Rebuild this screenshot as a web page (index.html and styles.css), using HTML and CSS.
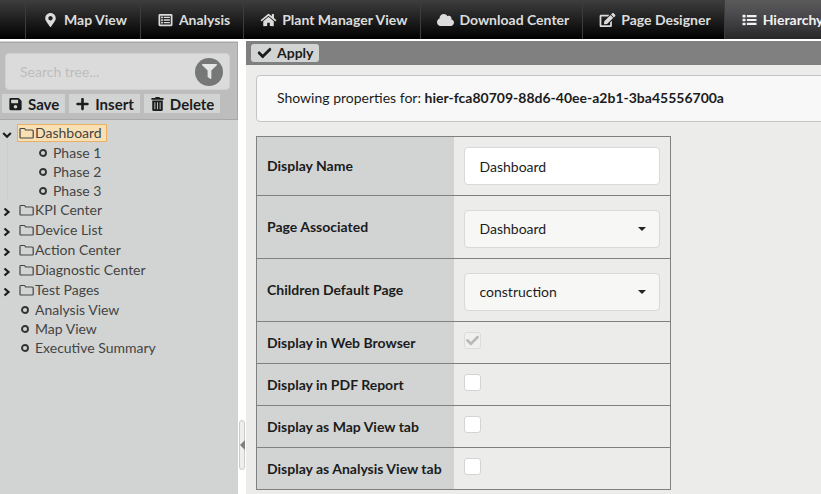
FILE: index.html
```
<!DOCTYPE html>
<html lang="en">
<head>
<meta charset="utf-8">
<title>Hierarchy</title>
<link rel="stylesheet" href="styles.css">
</head>
<body>
<svg class="sprite" aria-hidden="true">
  <symbol id="i-folder" viewBox="0 0 15 12"><path d="M1 10.2V2.3q0-.8.8-.8h3.4q.6 0 .8.5l.6 1h6.6q1 0 1 .9v6.3q0 .8-.8.8H1.8q-.8 0-.8-.8z" fill="none" stroke="currentColor" stroke-width="1.2"/></symbol>
  <symbol id="i-right" viewBox="0 0 10 10"><path d="M2.5 1.5L6.500 5l-4 3.500" fill="none" stroke="currentColor" stroke-width="2.2"/></symbol>
  <symbol id="i-down" viewBox="0 0 10 10"><path d="M1.200 3L5 6.700 8.800 3" fill="none" stroke="currentColor" stroke-width="2.2"/></symbol>
  <symbol id="i-dot" viewBox="0 0 10 10"><circle cx="5" cy="5" r="3" fill="none" stroke="currentColor" stroke-width="1.900"/></symbol>
  <symbol id="i-check" viewBox="0 0 512 512"><path d="M173.898 439.404l-166.4-166.4c-9.997-9.997-9.997-26.206 0-36.204l36.203-36.204c9.997-9.998 26.207-9.998 36.204 0L192 312.69 432.095 72.596c9.997-9.997 26.207-9.997 36.204 0l36.203 36.204c9.997 9.997 9.997 26.206 0 36.204l-294.4 294.401c-9.998 9.997-26.207 9.997-36.204-.001z"/></symbol>
</svg>

<nav class="nav">
  <a class="nav-item" href="#"><svg class="icon" viewBox="0 0 384 512"><path d="M172.268 501.67C26.97 291.031 0 269.413 0 192 0 85.961 85.961 0 192 0s192 85.961 192 192c0 77.413-26.97 99.031-172.268 309.67-9.535 13.774-29.93 13.773-39.464 0zM192 272c44.183 0 80-35.817 80-80s-35.817-80-80-80-80 35.817-80 80 35.817 80 80 80z"/></svg>Map View</a>
  <a class="nav-item" href="#"><svg class="icon" viewBox="0 0 512 512"><path fill-rule="evenodd" d="M48 32h416q48 0 48 48v352q0 48-48 48H48q-48 0-48-48V80q0-48 48-48zM64 96v320h384V96zM96 128h64v64H96zM96 224h64v64H96zM96 320h64v64H96zM192 136h224v48H192zM192 232h224v48H192zM192 328h224v48H192z"/></svg>Analysis</a>
  <a class="nav-item" href="#"><svg class="icon" viewBox="0 0 576 512"><path d="M280.37 148.26L96 300.11V464a16 16 0 0 0 16 16l112.06-.29a16 16 0 0 0 15.92-16V368a16 16 0 0 1 16-16h64a16 16 0 0 1 16 16v95.64a16 16 0 0 0 16 16.05L464 480a16 16 0 0 0 16-16V300L295.67 148.26a12.19 12.19 0 0 0-15.3 0zM571.6 251.47L488 182.56V44.05a12 12 0 0 0-12-12h-56a12 12 0 0 0-12 12v72.61L318.47 43a48 48 0 0 0-61 0L4.34 251.47a12 12 0 0 0-1.6 16.9l25.5 31A12 12 0 0 0 45.15 301l235.22-193.74a12.19 12.19 0 0 1 15.3 0L530.9 301a12 12 0 0 0 16.9-1.6l25.5-31a12 12 0 0 0-1.7-16.93z"/></svg>Plant Manager View</a>
  <a class="nav-item" href="#"><svg class="icon" viewBox="0 0 640 512"><path d="M537.6 226.6c4.1-10.7 6.4-22.4 6.4-34.6 0-53-43-96-96-96-19.7 0-38.1 6-53.3 16.2C367 64.2 315.3 32 256 32c-88.4 0-160 71.6-160 160 0 2.7.1 5.4.2 8.1C40.2 219.8 0 273.2 0 336c0 79.5 64.5 144 144 144h368c70.7 0 128-57.3 128-128 0-61.900-44-113.600-102.400-125.400z"/></svg>Download Center</a>
  <a class="nav-item" href="#"><svg class="icon" viewBox="0 0 576 512"><path d="M402.6 83.2l90.2 90.2c3.8 3.8 3.8 10 0 13.8L274.4 405.6l-92.8 10.3c-12.4 1.4-22.9-9.1-21.5-21.5l10.3-92.8L388.8 83.2c3.8-3.8 10-3.8 13.8 0zm162-22.9l-48.8-48.8c-15.2-15.2-39.9-15.2-55.2 0l-35.4 35.4c-3.8 3.8-3.8 10 0 13.8l90.2 90.2c3.8 3.8 10 3.8 13.8 0l35.4-35.4c15.2-15.3 15.2-40 0-55.2zM384 346.2V448H64V128h229.800c3.200 0 6.200-1.300 8.500-3.500l40-40c7.600-7.600 2.200-20.500-8.500-20.500H48C21.500 64 0 85.500 0 112v352c0 26.500 21.500 48 48 48h352c26.500 0 48-21.500 48-48V306.200c0-10.700-12.900-16-20.500-8.500l-40 40c-2.200 2.300-3.500 5.300-3.500 8.500z"/></svg>Page Designer</a>
  <a class="nav-item active" href="#" aria-current="page"><svg class="icon" viewBox="0 0 512 512"><path d="M16 64h80q16 0 16 16v64q0 16-16 16H16q-16 0-16-16V80q0-16 16-16zM16 208h80q16 0 16 16v64q0 16-16 16H16q-16 0-16-16v-64q0-16 16-16zM16 352h80q16 0 16 16v64q0 16-16 16H16q-16 0-16-16v-64q0-16 16-16zM160 72h352v80H160zM160 216h352v80H160zM160 360h352v80H160z"/></svg>Hierarchy</a>
</nav>

<div class="workspace">
  <aside class="sidebar">
    <div class="tools">
      <div class="search">
        <input class="search-input" type="text" placeholder="Search tree..." aria-label="Search tree">
        <button class="filter" type="button" aria-label="Filter"><svg viewBox="0 0 512 512"><path d="M487.976 0H24.028C2.710 0-8.047 25.866 7.058 40.971L192 225.941V432c0 7.831 3.821 15.170 10.237 19.662l80 55.980C298.020 518.690 320 507.493 320 487.980V225.941l184.947-184.970C520.021 25.896 509.338 0 487.976 0z"/></svg></button>
      </div>
      <div class="actions">
        <button class="btn" type="button"><svg class="icon" viewBox="0 0 448 512"><path d="M433.941 129.941l-83.882-83.882A48 48 0 0 0 316.118 32H48C21.490 32 0 53.490 0 80v352c0 26.510 21.490 48 48 48h352c26.510 0 48-21.490 48-48V163.882a48 48 0 0 0-14.059-33.941zM224 416c-35.346 0-64-28.654-64-64 0-35.346 28.654-64 64-64s64 28.654 64 64c0 35.346-28.654 64-64 64zm96-304.520V212c0 6.627-5.373 12-12 12H76c-6.627 0-12-5.373-12-12V108c0-6.627 5.373-12 12-12h228.520c3.183 0 6.235 1.264 8.485 3.515l3.480 3.480A11.996 11.996 0 0 1 320 111.480z"/></svg>Save</button>
        <button class="btn" type="button"><svg class="icon" viewBox="0 0 448 512"><path d="M416 208H272V64c0-17.670-14.330-32-32-32h-32c-17.670 0-32 14.330-32 32v144H32c-17.670 0-32 14.330-32 32v32c0 17.670 14.330 32 32 32h144v144c0 17.670 14.330 32 32 32h32c17.670 0 32-14.330 32-32V304h144c17.670 0 32-14.330 32-32v-32c0-17.670-14.330-32-32-32z"/></svg>Insert</button>
        <button class="btn" type="button"><svg class="icon" viewBox="0 0 448 512"><path fill-rule="evenodd" d="M16 32h120l18-32h140l18 32h120q16 0 16 16v48H0V48q0-16 16-16zM32 128h384v336q0 48-48 48H80q-48 0-48-48zM112 192v256h32V192zM208 192v256h32V192zM304 192v256h32V192z"/></svg>Delete</button>
      </div>
    </div>
    <ul class="tree">
      <li>
        <div class="row folder"><svg class="toggle"><use href="#i-down"/></svg><a class="node selected" href="#"><svg class="folder-icon"><use href="#i-folder"/></svg>Dashboard</a></div>
        <ul class="branch">
          <li class="row leaf"><svg class="dot"><use href="#i-dot"/></svg><a class="name" href="#">Phase 1</a></li>
          <li class="row leaf"><svg class="dot"><use href="#i-dot"/></svg><a class="name" href="#">Phase 2</a></li>
          <li class="row leaf"><svg class="dot"><use href="#i-dot"/></svg><a class="name" href="#">Phase 3</a></li>
        </ul>
      </li>
      <li class="row folder"><svg class="toggle"><use href="#i-right"/></svg><a class="node" href="#"><svg class="folder-icon"><use href="#i-folder"/></svg>KPI Center</a></li>
      <li class="row folder"><svg class="toggle"><use href="#i-right"/></svg><a class="node" href="#"><svg class="folder-icon"><use href="#i-folder"/></svg>Device List</a></li>
      <li class="row folder"><svg class="toggle"><use href="#i-right"/></svg><a class="node" href="#"><svg class="folder-icon"><use href="#i-folder"/></svg>Action Center</a></li>
      <li class="row folder"><svg class="toggle"><use href="#i-right"/></svg><a class="node" href="#"><svg class="folder-icon"><use href="#i-folder"/></svg>Diagnostic Center</a></li>
      <li class="row folder"><svg class="toggle"><use href="#i-right"/></svg><a class="node" href="#"><svg class="folder-icon"><use href="#i-folder"/></svg>Test Pages</a></li>
      <li class="row leaf"><svg class="dot"><use href="#i-dot"/></svg><a class="name" href="#">Analysis View</a></li>
      <li class="row leaf"><svg class="dot"><use href="#i-dot"/></svg><a class="name" href="#">Map View</a></li>
      <li class="row leaf"><svg class="dot"><use href="#i-dot"/></svg><a class="name" href="#">Executive Summary</a></li>
    </ul>
  </aside>

  <div class="splitter"><button class="handle" type="button" aria-label="Collapse sidebar"></button></div>

  <main class="main">
    <div class="toolbar"><button class="btn apply" type="button"><svg class="icon" viewBox="0 0 512 512"><use href="#i-check"/></svg>Apply</button></div>
    <div class="content">
      <div class="message">Showing properties for: <b>hier-fca80709-88d6-40ee-a2b1-3ba45556700a</b></div>
      <table class="props">
        <tr><th scope="row"><label for="name">Display Name</label></th><td><input class="field" id="name" type="text" value="Dashboard"></td></tr>
        <tr><th scope="row"><label for="page">Page Associated</label></th><td><div class="select"><select class="field" id="page"><option>Dashboard</option></select></div></td></tr>
        <tr><th scope="row"><label for="child">Children Default Page</label></th><td><div class="select"><select class="field" id="child"><option>construction</option></select></div></td></tr>
        <tr><th scope="row"><label for="web">Display in Web Browser</label></th><td><div class="tick"><input class="check" id="web" type="checkbox" checked disabled><svg class="mark" viewBox="0 0 512 512"><use href="#i-check"/></svg></div></td></tr>
        <tr><th scope="row"><label for="pdf">Display in PDF Report</label></th><td><div class="tick"><input class="check" id="pdf" type="checkbox"></div></td></tr>
        <tr><th scope="row"><label for="map">Display as Map View tab</label></th><td><div class="tick"><input class="check" id="map" type="checkbox"></div></td></tr>
        <tr><th scope="row"><label for="analysis">Display as Analysis View tab</label></th><td><div class="tick"><input class="check" id="analysis" type="checkbox"></div></td></tr>
      </table>
    </div>
  </main>
</div>
</body>
</html>
```

FILE: styles.css
```
* { box-sizing: border-box; }
body {
  margin: 0;
  min-height: 100vh;
  display: flex;
  flex-direction: column;
  overflow: hidden;
  background: #fff;
  color: #1b1c1d;
  font: 14px/20px Lato, "Liberation Sans", sans-serif;
}
button, input, select { font: inherit; color: inherit; margin: 0; }
a { color: inherit; text-decoration: none; }
ul { list-style: none; margin: 0; padding: 0; }
svg { fill: currentColor; flex: none; }
.sprite { position: absolute; width: 0; height: 0; }
.icon { width: 17px; height: 14px; }

.nav {
  display: flex;
  height: 39px;
  padding-left: 25px;
  background: linear-gradient(#3e3e3e, #000);
  color: #dcdcdc;
  font-weight: 700;
  white-space: nowrap;
  overflow: hidden;
}
.nav-item {
  display: flex;
  flex: none;
  align-items: center;
  gap: 5px;
  padding: 0 13px 0 16px;
  border-left: 1px solid #3c3c3c;
}
.nav-item.active { background: linear-gradient(#5a5a5a, #4a484c 40%, #282828); color: #f2f2f2; }

.workspace { flex: 1; display: flex; margin-top: 2px; }

.sidebar { flex: 0 0 238px; min-width: 0; background: #d2d4d3; }
.tools {
  margin-top: 1px;
  padding: 10px 7px 6px 2px;
  background: #bdbdbd;
  border: 1px solid #a8a8a8;
  border-left: 0;
}
.search {
  display: flex;
  align-items: center;
  height: 37px;
  margin: 0 0 4px 3px;
  padding: 0 6px 0 14px;
  background: #dbdbdb;
  border: 1px solid #d0d0d0;
  border-radius: 4px;
}
.search-input { flex: 1; min-width: 0; padding: 0; border: 0; background: none; outline: 0; }
.search-input::placeholder { color: #bdbdbd; opacity: 1; }
.filter {
  display: grid;
  place-items: center;
  width: 28px;
  height: 28px;
  padding: 0;
  border: 0;
  border-radius: 50%;
  background: #767877;
  color: #e4e6e5;
}
.filter svg { width: 15px; height: 15px; }
.actions { display: flex; gap: 4px; }
.btn {
  display: flex;
  align-items: center;
  gap: 4px;
  height: 19px;
  padding: 0 6px 0 5px;
  border: 0;
  background: #d2d4d3;
  color: #1b1c1d;
  font-size: 15px;
  font-weight: 700;
}

.tree { padding: 3px 0; color: #444; }
.row { display: flex; align-items: center; }
.folder { height: 20px; padding-left: 2px; }
.leaf { height: 19px; padding-left: 20px; gap: 5px; }
.branch { margin-left: 7px; padding-left: 10px; border-left: 1px dotted #c4c6c5; }
.toggle { width: 10px; height: 10px; margin-top: 4px; color: #1b1c1d; }
.dot { width: 10px; height: 10px; color: #333; }
.node {
  display: flex;
  align-items: center;
  gap: 1px;
  height: 18px;
  margin-left: 5px;
  padding: 0 4px 0 1px;
  border: 1px solid transparent;
}
.node.selected { background: #f8e0b4; border-color: #e8b062; }
.folder-icon { width: 15px; height: 12px; }

.splitter { flex: 0 0 8px; display: flex; flex-direction: column; align-items: center; justify-content: flex-end; padding-bottom: 24px; }
.handle {
  display: grid;
  place-items: center;
  width: 6px;
  height: 50px;
  padding: 0;
  border: 1px solid #ccc;
  border-radius: 3px;
  background: #eee;
}
.handle::before { content: ""; border: 5px solid transparent; border-left: 0; border-right-color: #808080; }

.main { flex: 1; min-width: 0; overflow: hidden; background: #ececea; }
.toolbar { height: 24px; padding: 3px 5px; background: #808080; }
.apply { height: 18px; border-radius: 3px; font-size: 14px; }
.content { padding: 10px 10px 0; }
.message {
  margin-right: -20px;
  padding: 12px 20px 13px;
  background: #f8f8f8;
  border: 1px solid #c4c5c5;
  border-radius: 4px;
  white-space: nowrap;
}
.props { margin-top: 14px; border-collapse: collapse; }
.props tr { border: 1px solid #808080; }
.props th {
  width: 197px;
  padding: 0 9px 0 10px;
  background: #d2d4d3;
  text-align: left;
  font-weight: 700;
  white-space: nowrap;
}
.props td { padding: 10px; }
.field {
  display: block;
  width: 196px;
  height: 38px;
  padding: 0 15px;
  border: 1px solid #d8d9d8;
  border-radius: 4px;
  background: #fff;
  outline: 0;
}
.select { position: relative; padding: 4px 0 0; }
.select .field { appearance: none; background: #f7f7f5; }
.select::after {
  content: "";
  position: absolute;
  right: 14px;
  top: 21px;
  border: 4px solid transparent;
  border-top-color: #222;
  border-bottom: 0;
}
.tick { position: relative; height: 21px; }
.check {
  display: block;
  appearance: none;
  width: 17px;
  height: 17px;
  border: 1px solid #d4d4d5;
  border-radius: 3px;
  background: #fff;
}
.check:disabled { background: #f0f0ef; border-color: #dcdcdc; }
.mark { position: absolute; left: 2px; top: 2px; width: 13px; height: 13px; color: #b9b9b9; pointer-events: none; }
```
